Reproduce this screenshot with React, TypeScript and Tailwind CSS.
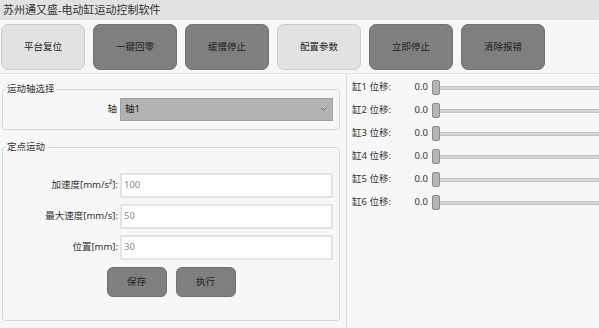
import React from "react";

const topButtons = [
  { label: "平台复位", dark: false },
  { label: "一键回零", dark: true },
  { label: "缓慢停止", dark: true },
  { label: "配置参数", dark: false },
  { label: "立即停止", dark: true },
  { label: "清除报错", dark: true },
];

const fields = [
  { label: "加速度[mm/s²]:", value: "100" },
  { label: "最大速度[mm/s]:", value: "50" },
  { label: "位置[mm]:", value: "30" },
];

const cylinders = [1, 2, 3, 4, 5, 6];

function Slider() {
  return (
    <div className="flex items-center flex-1 h-[15px]">
      <div className="w-[8px] h-[15px] shrink-0 rounded-[2px] bg-[#b5b5b5] border border-[#8c8c8c]" />
      <div className="flex-1 h-[4px] bg-[#d6d6d6] border-y border-[#c4c4c4]" />
    </div>
  );
}

export default function App() {
  return (
    <div
      className="w-[599px] h-[328px] overflow-hidden bg-[#f7f7f7] text-[#222] flex flex-col"
      style={{ fontFamily: '"Noto Sans", "Noto Sans CJK SC", sans-serif' }}
    >
      {/* Title bar */}
      <div className="h-[20px] shrink-0 bg-[#e2e2e2] px-[3px] text-[11px] leading-[20px] text-[#333]">
        苏州通又盛-电动缸运动控制软件
      </div>

      {/* Toolbar */}
      <div className="h-[54px] shrink-0 flex gap-[8px] pt-[4px] pl-[1px] border-b border-[#e2e2e2]">
        {topButtons.map((b) => (
          <button
            key={b.label}
            className={`w-[84px] h-[46px] rounded-[7px] border text-[9.5px] leading-none text-[#222] ${
              b.dark ? "bg-[#7f7f7f] border-[#727272]" : "bg-[#e2e2e2] border-[#cdcdcd]"
            }`}
          >
            {b.label}
          </button>
        ))}
      </div>

      <div className="flex flex-1 min-h-0">
        {/* Left panel */}
        <div className="w-[346px] shrink-0 pt-[9px]">
          <fieldset className="ml-[2px] w-[338px] border border-[#d3dce2] rounded-[3px] pt-[3px] pb-[8px]">
            <legend className="ml-[3px] px-[1px] text-[9.5px] leading-[12px] text-[#333]">运动轴选择</legend>
            <div className="flex items-center">
              <span className="w-[114px] text-right text-[9.5px] text-[#333]">轴</span>
              <div className="ml-[3px] w-[213px] h-[23px] bg-[#b3b3b3] border border-[#a0a0a0] flex items-center justify-between pl-[4px] pr-[5px]">
                <span className="text-[9.5px] text-[#222]">轴1</span>
                <svg width="7" height="5" viewBox="0 0 7 5" className="text-[#666]">
                  <path d="M1 1 L3.5 3.5 L6 1" fill="none" stroke="currentColor" strokeWidth="0.9" />
                </svg>
              </div>
            </div>
          </fieldset>

          <fieldset className="mt-[11px] ml-[2px] w-[338px] border border-[#d3dce2] rounded-[3px] pt-[20px] pb-[23px]">
            <legend className="ml-[3px] px-[1px] text-[9.5px] leading-[12px] text-[#333]">定点运动</legend>
            <div className="flex flex-col gap-[6px]">
              {fields.map((f) => (
                <div key={f.label} className="flex items-center">
                  <span className="w-[115px] text-right text-[9.5px] text-[#333] whitespace-nowrap">{f.label}</span>
                  <div className="ml-[2px] w-[213px] h-[25px] bg-white border-2 border-[#e3e3e3] flex items-center pl-[2px] text-[9.5px] text-[#8a8a8a]">
                    {f.value}
                  </div>
                </div>
              ))}
            </div>
            <div className="mt-[7px] flex justify-center gap-[9px]">
              <button className="w-[60px] h-[30px] rounded-[6px] bg-[#7f7f7f] border border-[#727272] text-[9.5px] text-[#222]">
                保存
              </button>
              <button className="w-[60px] h-[30px] rounded-[6px] bg-[#7f7f7f] border border-[#727272] text-[9.5px] text-[#222]">
                执行
              </button>
            </div>
          </fieldset>
        </div>

        {/* Right panel */}
        <div className="flex-1 border-l border-[#dedede] pt-[2px]">
          {cylinders.map((n) => (
            <div key={n} className="h-[23px] flex items-center pl-[5px] text-[9.5px] text-[#333]">
              <span className="w-[48px] whitespace-nowrap">缸{n} 位移:</span>
              <span className="w-[28px] text-right">0.0</span>
              <div className="ml-[4px] flex-1 flex">
                <Slider />
              </div>
            </div>
          ))}
        </div>
      </div>
    </div>
  );
}
